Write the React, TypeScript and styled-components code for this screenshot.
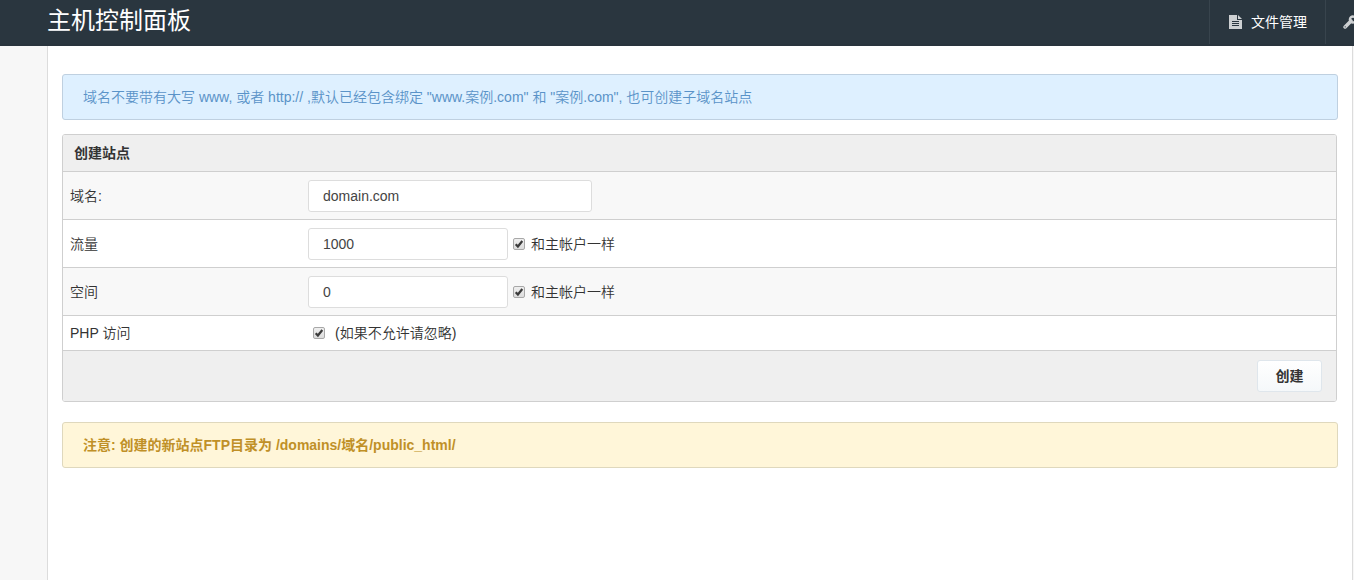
import React, { useState } from "react";
import styled, { createGlobalStyle } from "styled-components";

const GlobalStyle = createGlobalStyle`
  * { box-sizing: border-box; }
  body {
    margin: 0;
    background: #f7f7f7;
    color: #333;
    font: 14px/20px "Liberation Sans", Arial, "Noto Sans CJK SC", sans-serif;
  }
  button, input { font: inherit; color: inherit; margin: 0; }
`;

const Page = styled.div`
  min-height: 100vh;
  display: flex;
  flex-direction: column;
`;

const Header = styled.header`
  display: flex;
  justify-content: space-between;
  height: 46px;
  padding-left: 47px;
  overflow: hidden;
  background: #2a363f;
  border-bottom: 2px solid #29343d;
  color: #fff;
`;

const Title = styled.h1`
  margin: 0;
  font-size: 24px;
  line-height: 42px;
  font-weight: 400;
  white-space: nowrap;
`;

const Nav = styled.nav`
  display: flex;
`;

const NavLink = styled.a<{ $clipped?: boolean }>`
  display: flex;
  align-items: center;
  gap: 9px;
  width: ${(p) => (p.$clipped ? "29px" : "116px")};
  padding-left: ${(p) => (p.$clipped ? "17px" : "19px")};
  overflow: hidden;
  border-left: 1px solid #38444d;
  color: #fff;
  text-decoration: none;
  white-space: nowrap;

  svg { flex: none; }
`;

const Panel = styled.main`
  flex: 1;
  margin: 0 1px 0 47px;
  padding: 28px 14px;
  background: #fff;
  border: solid #dcdcdc;
  border-width: 0 1px;
`;

const Notice = styled.p<{ $warning?: boolean }>`
  margin: 0;
  padding: 12px 20px;
  border: 1px solid ${(p) => (p.$warning ? "#dfd8bd" : "#bfd0e0")};
  border-radius: 3px;
  background: ${(p) => (p.$warning ? "#fff6d9" : "#def0ff")};
  color: ${(p) => (p.$warning ? "#c09027" : "#5a93c8")};
  font-weight: ${(p) => (p.$warning ? 700 : 350)};
`;

const Form = styled.form`
  margin: 14px 1px 20px 0;
`;

const Table = styled.table`
  width: 100%;
  table-layout: fixed;
  border: 1px solid #cfcfcf;
  border-radius: 3px;
  border-spacing: 0;
  overflow: hidden;
`;

const LabelColumn = styled.col`
  width: 238px;
`;

const Heading = styled.th`
  height: 37px;
  padding: 0 11px;
  background: #efefef;
  border-bottom: 1px solid #cfcfcf;
  text-align: left;
`;

const Row = styled.tr`
  &:nth-child(odd) { background: #f8f8f8; }
`;

const LabelCell = styled.th`
  padding: 7px;
  border-bottom: 1px solid #cfcfcf;
  text-align: left;
  font-weight: 350;
`;

const FieldCell = styled.td`
  padding: 7px;
  border-bottom: 1px solid #cfcfcf;
  font-weight: 350;
`;

const Field = styled.div<{ $tall?: boolean }>`
  display: flex;
  align-items: center;
  gap: 5px;
  padding: ${(p) => (p.$tall ? "1px 0 0" : "0 0 0 5px")};
`;

const TextInput = styled.input<{ $wide?: boolean }>`
  width: ${(p) => (p.$wide ? "284px" : "200px")};
  height: 32px;
  padding: 0 14px;
  border: 1px solid #ddd;
  border-radius: 3px;
  background: #fff;
  color: #444;
`;

const CheckLabel = styled.label<{ $gap: number }>`
  display: flex;
  align-items: center;
  gap: ${(p) => p.$gap}px;
`;

const CheckBoxFrame = styled.span`
  position: relative;
  display: block;
  width: 12px;
  height: 12px;

  svg {
    position: absolute;
    inset: 0;
    pointer-events: none;
  }
`;

const CheckInput = styled.input`
  appearance: none;
  display: block;
  width: 12px;
  height: 12px;
  border: 1px solid #a8a8a8;
  border-radius: 2px;
  background: linear-gradient(#efefef, #dcdcdc);
`;

const FooterCell = styled.td`
  padding: 9px 14px;
  background: #efefef;
  text-align: right;
`;

const CreateButton = styled.button`
  width: 65px;
  height: 32px;
  padding: 0;
  border: 1px solid #dfe6ec;
  border-radius: 3px;
  background: linear-gradient(#fff, #f5f8fa);
  font-weight: 700;
  vertical-align: top;
`;

function FileIcon() {
  return (
    <svg width="13" height="14" viewBox="0 0 13 14" aria-hidden="true">
      <path fill="#cdd0d2" d="M0 0h8v5h5v9H0z" />
      <path fill="#cdd0d2" d="M9 0l4 4H9z" />
      <path stroke="#2a363f" d="M3 6.500h7M3 8.500h7M3 10.500h7" />
    </svg>
  );
}

function WrenchIcon() {
  return (
    <svg width="14" height="14" viewBox="0 0 14 14" aria-hidden="true">
      <path d="M2.100 11.900L8 6" fill="none" stroke="#cdd0d2" strokeWidth="3.600" strokeLinecap="round" />
      <path
        d="M12.600 3.200A3 3 0 1 0 12.700 5.600"
        fill="none"
        stroke="#cdd0d2"
        strokeWidth="2.400"
        strokeLinecap="round"
      />
      <circle cx="2.200" cy="11.800" r="0.600" fill="#2a363f" />
    </svg>
  );
}

function Check({ label, gap }: { label: string; gap: number }) {
  const [checked, setChecked] = useState(true);
  return (
    <CheckLabel $gap={gap}>
      <CheckBoxFrame>
        <CheckInput type="checkbox" checked={checked} onChange={(e) => setChecked(e.target.checked)} />
        {checked && (
          <svg width="12" height="12" viewBox="0 0 12 12" aria-hidden="true">
            <path d="M2.700 6.200l2.200 2.300L9.300 3" fill="none" stroke="#3b3b3b" strokeWidth="2.200" />
          </svg>
        )}
      </CheckBoxFrame>
      {label}
    </CheckLabel>
  );
}

export default function App() {
  return (
    <Page>
      <GlobalStyle />
      <Header>
        <Title>主机控制面板</Title>
        <Nav>
          <NavLink href="#files"><FileIcon />文件管理</NavLink>
          <NavLink href="#tools" aria-label="工具" $clipped><WrenchIcon /></NavLink>
        </Nav>
      </Header>
      <Panel>
        <Notice>域名不要带有大写 www, 或者 http:// ,默认已经包含绑定 "www.案例.com" 和 "案例.com", 也可创建子域名站点</Notice>
        <Form onSubmit={(e) => e.preventDefault()}>
          <Table>
            <colgroup>
              <LabelColumn />
              <col />
            </colgroup>
            <thead>
              <tr><Heading colSpan={2}>创建站点</Heading></tr>
            </thead>
            <tbody>
              <Row>
                <LabelCell scope="row"><label htmlFor="domain">域名:</label></LabelCell>
                <FieldCell><Field $tall><TextInput id="domain" $wide defaultValue="domain.com" /></Field></FieldCell>
              </Row>
              <Row>
                <LabelCell scope="row"><label htmlFor="traffic">流量</label></LabelCell>
                <FieldCell>
                  <Field $tall><TextInput id="traffic" defaultValue="1000" /><Check label="和主帐户一样" gap={6} /></Field>
                </FieldCell>
              </Row>
              <Row>
                <LabelCell scope="row"><label htmlFor="space">空间</label></LabelCell>
                <FieldCell>
                  <Field $tall><TextInput id="space" defaultValue="0" /><Check label="和主帐户一样" gap={6} /></Field>
                </FieldCell>
              </Row>
              <Row>
                <LabelCell scope="row">PHP 访问</LabelCell>
                <FieldCell><Field><Check label="(如果不允许请忽略)" gap={10} /></Field></FieldCell>
              </Row>
            </tbody>
            <tfoot>
              <tr><FooterCell colSpan={2}><CreateButton type="submit">创建</CreateButton></FooterCell></tr>
            </tfoot>
          </Table>
        </Form>
        <Notice $warning>注意: 创建的新站点FTP目录为 /domains/域名/public_html/</Notice>
      </Panel>
    </Page>
  );
}
